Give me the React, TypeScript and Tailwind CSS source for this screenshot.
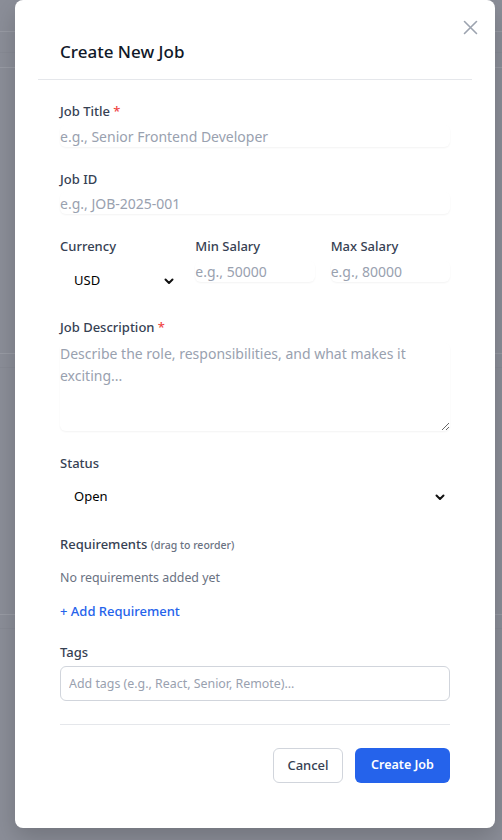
import React from "react";

function Chevron() {
  return (
    <svg width="10" height="7" viewBox="0 0 10 7" fill="none">
      <path d="M1.5 1.5 L5 5 L8.5 1.5" stroke="#111" strokeWidth="2" strokeLinecap="round" strokeLinejoin="round" />
    </svg>
  );
}

export default function App() {
  return (
    <div className="relative h-[840px] w-full overflow-hidden bg-[#8b8e98] font-['Noto_Sans',sans-serif]">
      {/* background page (dimmed) */}
      <div className="flex flex-col">
        <div className="h-[32px] border-b border-[#989ba4]" />
        <div className="h-[21px] border-b border-[#878a94]" />
        <div className="h-[15px] border-b border-[#989ba4]" />
        <div className="h-[286px] border-b border-[#989ba4]" />
        <div className="h-[14px] border-b border-[#878a94]" />
        <div className="h-[247px] border-b border-[#989ba4]" />
        <div className="h-[14px] border-b border-[#878a94]" />
      </div>

      <div className="absolute left-[15px] top-0 h-[828px] w-[480px] rounded-lg bg-white shadow-[0_10px_25px_rgba(0,0,0,0.18)]">
        <button className="absolute left-[447px] top-[19px] flex h-[16px] w-[16px] items-center justify-center">
          <svg width="15" height="15" viewBox="0 0 15 15" fill="none">
            <path d="M1.5 1.5 L13.5 13.5 M13.5 1.5 L1.5 13.5" stroke="#9ca3af" strokeWidth="1.6" strokeLinecap="round" />
          </svg>
        </button>

        <div className="mx-[23px] border-b border-gray-200 pb-[13px] pl-[22px] pt-[38px]">
          <h2 className="text-[17px] font-medium leading-[28px] text-gray-900">Create New Job</h2>
        </div>

        <div className="flex flex-col px-[45px]">
          <label className="mt-[21px] text-[13px] font-medium leading-5 text-gray-700">
            Job Title <span className="text-[#ef4444]">*</span>
          </label>
          <input
            className="mt-1 h-[22px] w-full rounded-md text-[14px] text-gray-900 shadow-[0_1px_2px_rgba(0,0,0,0.05)] outline-none placeholder:text-gray-400"
            placeholder="e.g., Senior Frontend Developer"
          />

          <label className="mt-[22px] text-[13px] font-medium leading-5 text-gray-700">Job ID</label>
          <input
            className="mt-[3px] h-[22px] w-full rounded-md text-[14px] text-gray-900 shadow-[0_1px_2px_rgba(0,0,0,0.05)] outline-none placeholder:text-gray-400"
            placeholder="e.g., JOB-2025-001"
          />

          <div className="mt-[22px] grid grid-cols-3 gap-4">
            <div className="flex flex-col">
              <label className="text-[13px] font-medium leading-5 text-gray-700">Currency</label>
              <div className="mt-[5px] flex h-[40px] items-center justify-between pl-[14px] pr-[5px] text-[13px] text-black">
                <span>USD</span>
                <Chevron />
              </div>
            </div>
            <div className="flex flex-col">
              <label className="text-[13px] font-medium leading-5 text-gray-700">Min Salary</label>
              <input
                className="mt-[5px] h-[21px] w-full rounded-md text-[14px] text-gray-900 shadow-[0_1px_2px_rgba(0,0,0,0.05)] outline-none placeholder:text-gray-400"
                placeholder="e.g., 50000"
              />
            </div>
            <div className="flex flex-col">
              <label className="text-[13px] font-medium leading-5 text-gray-700">Max Salary</label>
              <input
                className="mt-[5px] h-[21px] w-full rounded-md text-[14px] text-gray-900 shadow-[0_1px_2px_rgba(0,0,0,0.05)] outline-none placeholder:text-gray-400"
                placeholder="e.g., 80000"
              />
            </div>
          </div>

          <label className="mt-[16px] text-[13px] font-medium leading-5 text-gray-700">
            Job Description <span className="text-[#ef4444]">*</span>
          </label>
          <textarea
            className="mt-[6px] h-[88px] w-full resize-y rounded-md text-[14px] leading-[22px] text-gray-900 shadow-[0_1px_2px_rgba(0,0,0,0.05)] outline-none placeholder:text-gray-400"
            placeholder="Describe the role, responsibilities, and what makes it exciting..."
          />

          <label className="mt-[22px] text-[13px] font-medium leading-5 text-gray-700">Status</label>
          <div className="mt-[4px] flex h-[40px] items-center justify-between pl-[14px] pr-[5px] text-[13px] text-black">
            <span>Open</span>
            <Chevron />
          </div>

          <div className="mt-[17px] text-[13px] font-medium leading-5 text-gray-700">
            Requirements <span className="text-[10.5px] font-medium text-gray-500">(drag to reorder)</span>
          </div>
          <p className="mt-[13px] text-[12.4px] leading-5 text-gray-500">No requirements added yet</p>
          <button className="mt-[13px] self-start text-[13px] font-medium leading-5 text-[#2563eb]">+ Add Requirement</button>

          <label className="mt-[21px] text-[13px] font-medium leading-5 text-gray-700">Tags</label>
          <input
            className="mt-1 h-[35px] w-full rounded-md border border-gray-300 px-2 text-[12.4px] text-gray-900 outline-none placeholder:text-gray-400"
            placeholder="Add tags (e.g., React, Senior, Remote)..."
          />

          <div className="mt-[23px] h-px w-full bg-gray-200" />

          <div className="mt-[23px] flex justify-end gap-3">
            <button className="h-[35px] w-[70px] rounded-md border border-gray-300 bg-white text-[13px] font-medium text-gray-700">
              Cancel
            </button>
            <button className="h-[35px] w-[95px] rounded-md bg-[#2563eb] text-[12.5px] font-semibold text-white">
              Create Job
            </button>
          </div>
        </div>
      </div>
    </div>
  );
}
